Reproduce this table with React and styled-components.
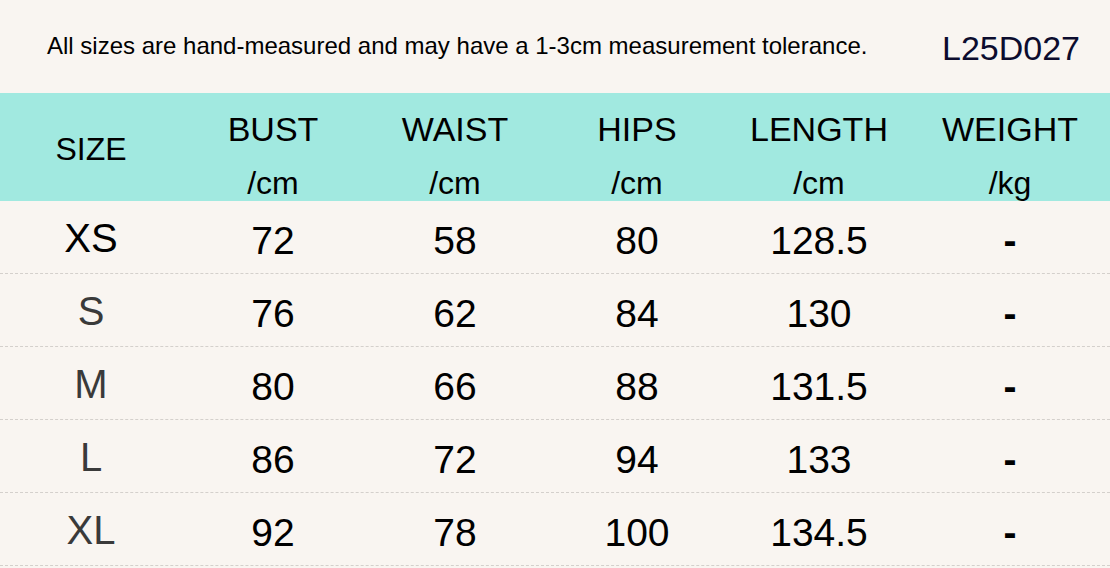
import React from 'react'
import styled, { createGlobalStyle } from 'styled-components'

const GlobalStyle = createGlobalStyle`
  body {
    margin: 0;
    background: #f9f5f1;
    font-family: "Liberation Sans", Arial, sans-serif;
  }
`

const rows = [
  { size: 'XS', bust: '72', waist: '58', hips: '80', length: '128.5', weight: '-', dark: true },
  { size: 'S', bust: '76', waist: '62', hips: '84', length: '130', weight: '-' },
  { size: 'M', bust: '80', waist: '66', hips: '88', length: '131.5', weight: '-' },
  { size: 'L', bust: '86', waist: '72', hips: '94', length: '133', weight: '-' },
  { size: 'XL', bust: '92', waist: '78', hips: '100', length: '134.5', weight: '-' },
]

const heads = [
  { title: 'BUST', unit: '/cm' },
  { title: 'WAIST', unit: '/cm' },
  { title: 'HIPS', unit: '/cm' },
  { title: 'LENGTH', unit: '/cm' },
  { title: 'WEIGHT', unit: '/kg' },
]

function App() {
  return (
    <Page>
      <GlobalStyle />
      <TopBar>
        <Note>All sizes are hand-measured and may have a 1-3cm measurement tolerance.</Note>
        <Code>L25D027</Code>
      </TopBar>
      <HeadRow>
        <HeadCell>
          <SizeHead>SIZE</SizeHead>
        </HeadCell>
        {heads.map((h) => (
          <HeadCell key={h.title}>
            <HeadTitle>{h.title}</HeadTitle>
            <HeadUnit>{h.unit}</HeadUnit>
          </HeadCell>
        ))}
      </HeadRow>
      {rows.map((r) => (
        <Row key={r.size}>
          <SizeCell $dark={r.dark}>{r.size}</SizeCell>
          <Cell>{r.bust}</Cell>
          <Cell>{r.waist}</Cell>
          <Cell>{r.hips}</Cell>
          <Cell>{r.length}</Cell>
          <Dash>{r.weight}</Dash>
        </Row>
      ))}
    </Page>
  )
}

const Page = styled.div`
  width: 1110px;
  height: 568px;
  overflow: hidden;
  background: #f9f5f1;
`

const TopBar = styled.div`
  height: 93px;
  display: flex;
  align-items: center;
  justify-content: space-between;
  padding: 0 30px 0 47px;
  box-sizing: border-box;
`

const Note = styled.div`
  font-size: 24px;
  color: #000;
  margin-top: -1px;
`

const Code = styled.div`
  font-size: 34px;
  color: #0c0c2e;
  margin-top: 4px;
`

const grid = `
  display: grid;
  grid-template-columns: repeat(5, 182px) 1fr;
`

const HeadRow = styled.div`
  ${grid}
  grid-template-rows: 108px;
  height: 108px;
  background: #a1e9e0;
`

const HeadCell = styled.div`
  display: flex;
  flex-direction: column;
  align-items: center;
  justify-content: center;
  color: #000;
`

const SizeHead = styled.div`
  font-size: 32px;
  margin-top: 4px;
`

const HeadTitle = styled.div`
  font-size: 34px;
  line-height: 36px;
  margin-top: 17px;
`

const HeadUnit = styled.div`
  font-size: 32px;
  line-height: 36px;
  margin-top: 18px;
`

const Row = styled.div`
  ${grid}
  height: 73px;
  border-bottom: 1px dashed #d4d0cc;
  box-sizing: border-box;
`

const Cell = styled.div`
  display: flex;
  align-items: center;
  justify-content: center;
  font-size: 39px;
  color: #000;
  padding-top: 8px;
`

const SizeCell = styled(Cell)`
  font-size: 40px;
  padding-top: 2px;
  color: ${(p) => (p.$dark ? '#000' : '#3a3a3a')};
`

const Dash = styled(Cell)`
  font-weight: 700;
`

export default App
